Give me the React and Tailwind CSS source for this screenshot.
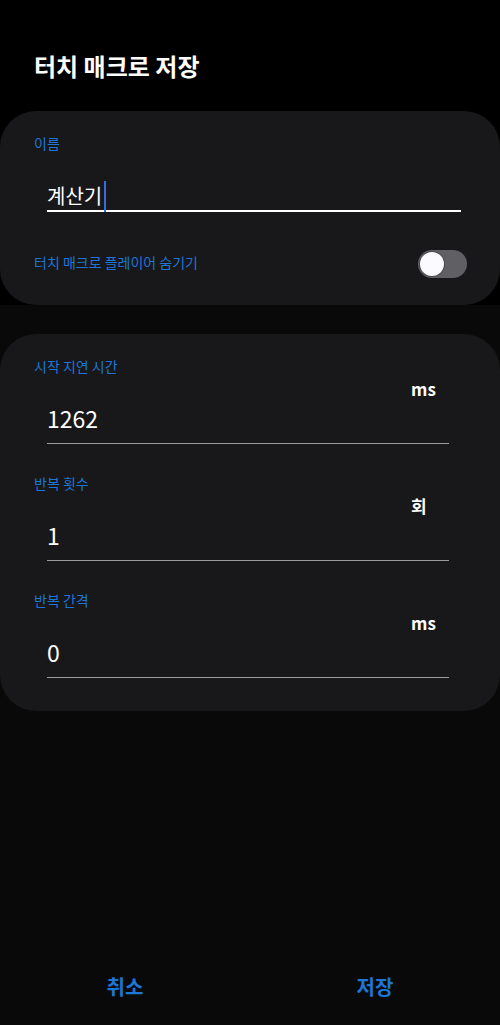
import React from "react";

const font = { fontFamily: '"Noto Sans CJK KR", "Noto Sans", sans-serif' };

const Field = ({ label, unit, value }) => (
  <div className="flex flex-col">
    <div className="text-[14px] leading-[18px] text-[#1d76d5]">{label}</div>
    <div className="mt-[4px] ml-[377px] text-[17px] leading-[20px] font-bold text-white">
      {unit}
    </div>
    <div className="mt-[4px] ml-[13px] text-[23px] leading-[30px] text-white">
      {value}
    </div>
    <div className="mt-[10px] ml-[13px] mr-[18px] h-px bg-[#9a9a9a]" />
  </div>
);

export default function App() {
  return (
    <div
      className="h-[1025px] w-[500px] flex flex-col bg-[#090909] overflow-hidden"
      style={font}
    >
      <div className="bg-black">
        <h1 className="pt-[50px] pl-[34px] mb-[29px] text-[24px] leading-[32px] font-bold text-white">
          터치 매크로 저장
        </h1>
        <div className="rounded-[36px] bg-[#18181a] pt-[23px] pb-[27px] pl-[34px] pr-[33px]">
          <div className="text-[14px] leading-[18px] text-[#1d76d5]">이름</div>
          <div className="mt-[30px] ml-[13px] mr-[6px]">
            <div className="flex items-start">
              <span className="text-[20px] leading-[28px] text-white">계산기</span>
              <span className="relative z-10 -mt-px mb-[-3px] ml-[2px] w-[2px] h-[31px] bg-[#2f6fe0]" />
            </div>
            <div className="h-[2px] bg-white" />
          </div>
          <div className="mt-[38px] flex items-center justify-between h-[28px]">
            <span className="text-[14px] leading-[18px] text-[#1d76d5] -mt-[5px]">
              터치 매크로 플레이어 숨기기
            </span>
            <div className="w-[49px] h-[28px] rounded-full bg-[#5f5f64] flex items-center pl-[2px]">
              <div className="w-[24px] h-[24px] rounded-full bg-[#fbfbff] ring-1 ring-[#4a4a4e]" />
            </div>
          </div>
        </div>
      </div>

      <div className="mt-[29px] rounded-[36px] bg-[#18181a] pt-[23px] pb-[33px] pl-[34px] pr-[33px] flex flex-col gap-[30px]">
        <Field label="시작 지연 시간" unit="ms" value="1262" />
        <Field label="반복 횟수" unit="회" value="1" />
        <Field label="반복 간격" unit="ms" value="0" />
      </div>

      <div className="flex-1" />

      <div className="grid grid-cols-2 h-[76px] items-center">
        <button className="text-center text-[20px] leading-[24px] font-bold text-[#1d76d5]">
          취소
        </button>
        <button className="text-center text-[20px] leading-[24px] font-bold text-[#1d76d5]">
          저장
        </button>
      </div>
    </div>
  );
}
